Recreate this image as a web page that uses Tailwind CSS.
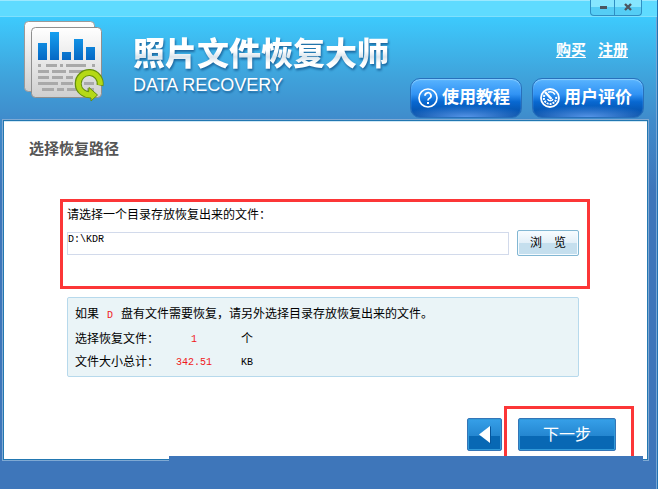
<!DOCTYPE html>
<html lang="zh-CN">
<head>
  <meta charset="UTF-8" />
  <meta name="viewport" content="width=device-width, initial-scale=1.0"/>
  <title>照片文件恢复大师</title>
  <script src="https://cdn.jsdelivr.net/npm/@tailwindcss/browser@4"></script>
</head>
<body class="bg-white pr-2.5 font-['Liberation_Sans','Noto_Sans_CJK_SC',sans-serif] text-xs text-black">
  <div class="relative flex min-h-screen flex-col border-r border-[#2173b3] bg-[#3e76ba] bg-[linear-gradient(to_bottom,#3dcafd_17px,#3fa4dc_75px,#3f8bcb_120px,#3e76ba_190px)] pr-2 pl-0.5 shadow-[inset_-1px_0_0_#77a5d4]">

    <!-- Title bar -->
    <div class="-mr-2 -ml-0.5 flex h-[17px] justify-end border-t border-b border-t-[#9be9ff] border-b-[#7fe0fd] bg-[#5fdbff] pr-[15px]">
      <div class="-mt-px flex h-4 rounded-b-sm border border-t-0 border-[#2f8fc4] bg-linear-to-b from-[#86e6ff] from-50% to-[#55cdf5] to-50%">
        <button type="button" aria-label="最小化" class="flex w-6 items-center justify-center border-r border-[#2f8fc4]">
          <svg class="h-3 w-3" viewBox="0 0 12 12"><path d="M3 4h7v3H3z" fill="#4b5660"/></svg>
        </button>
        <button type="button" aria-label="关闭" class="flex w-[26px] items-center justify-center">
          <svg class="h-3 w-3" viewBox="0 0 12 12"><path d="M3 2l6 6M9 2l-6 6" stroke="#4b5660" stroke-width="2.4"/></svg>
        </button>
      </div>
    </div>

    <!-- Header -->
    <header class="flex h-[102px] items-start">
      <svg class="mt-1 ml-5 h-[82px] w-[84px] shrink-0" viewBox="0 0 84 82">
        <defs>
          <linearGradient id="paper" x1="0" y1="0" x2="0" y2="1"><stop offset="0" stop-color="#fff"/><stop offset="1" stop-color="#cfcfcf"/></linearGradient>
          <linearGradient id="bar" x1="0" y1="0" x2="0" y2="1"><stop offset="0" stop-color="#16a0f0"/><stop offset="1" stop-color="#0668c4"/></linearGradient>
        </defs>
        <rect x="2.5" y="0.5" width="70" height="70" rx="4" fill="url(#paper)" stroke="#999"/>
        <rect x="9.5" y="6.5" width="70" height="70" rx="4" fill="url(#paper)" stroke="#8f8f8f"/>
        <g fill="url(#bar)">
          <path d="M16 22h9v17h-9zM28 11h9v28h-9zM40 31h9v8h-9zM52 18h9v21h-9zM64 26h9v13h-9z"/>
        </g>
        <path d="M16 44.5h3M24 44.5h11M38 44.5h3M44 44.5h20M70 44.5h3M16 50.5h11M30 50.5h14M47 50.5h26M16 56.5h11M30 56.5h11M44 56.5h7M16 62.5h20M39 62.5h12M62 62.5h10M20 68.5h12M35 68.5h7M45 68.5h14M65 68.5h7" stroke="#a9a9a9" stroke-width="3"/>
        <g transform="translate(-2 -1)">
          <path d="M80 65.5A11 11 0 1 0 70 74.5" fill="none" stroke="#648f0d" stroke-width="7"/>
          <path d="M69 67.5l8.5 7.5-6.500 6v-3l-3-.5z" fill="#b5d916" stroke="#648f0d" stroke-linejoin="round"/>
          <path d="M80.3 65A11 11 0 1 0 71.5 74.5" fill="none" stroke="#b5d916" stroke-width="4.8"/>
        </g>
      </svg>
      <div class="mt-3.5 ml-[27px] flex-1 whitespace-nowrap text-white">
        <h1 class="bg-[linear-gradient(to_bottom,#fff_50%,#d9e4ec_65%,#fff_80%)] bg-clip-text font-['Noto_Sans_CJK_SC',sans-serif] text-[32px] leading-10 font-black text-transparent drop-shadow-[1px_2px_1px_#1c679f]">照片文件恢复大师</h1>
        <p class="text-lg leading-7 [text-shadow:1px_2px_2px_#1c679f]">DATA RECOVERY</p>
      </div>
      <div class="mr-[5px] flex h-full flex-col items-end justify-between pt-[21px]">
        <nav class="mr-4 flex gap-3 text-[15px] leading-6 font-bold text-white underline underline-offset-2">
          <a href="#buy">购买</a>
          <a href="#register">注册</a>
        </nav>
        <div class="flex gap-2.5">
          <button type="button" class="mb-px flex h-10 w-28 items-center justify-center gap-1 rounded-[10px] border border-[#2870bb] bg-[radial-gradient(60%_30%_at_bottom,#5595e8_0%,transparent_100%),linear-gradient(to_bottom,#59b4ff_0%,#3193f4_40%,#0868d1_60%,#044a9f_100%)] pr-1 text-[17px] font-bold text-white shadow-[inset_0_1px_1px_#8bd0ff]">
            <svg class="h-5 w-5" viewBox="0 0 20 20" fill="none" stroke="#fff">
              <circle cx="10" cy="10" r="9" stroke-width="1.6"/>
              <path d="M7 7.8a3 3 0 1 1 4.5 2.5Q10 11 10 12.5" stroke-width="1.8"/>
              <path d="M10 14v2" stroke-width="2"/>
            </svg>
            使用教程
          </button>
          <button type="button" class="mb-px flex h-10 w-28 items-center justify-center gap-1 rounded-[10px] border border-[#2870bb] bg-[radial-gradient(60%_30%_at_bottom,#5595e8_0%,transparent_100%),linear-gradient(to_bottom,#59b4ff_0%,#3193f4_40%,#0868d1_60%,#044a9f_100%)] pr-1 text-[17px] font-bold text-white shadow-[inset_0_1px_1px_#8bd0ff]">
            <svg class="h-5 w-5" viewBox="0 0 20 20" fill="none" stroke="#fff">
              <circle cx="10" cy="10" r="9" stroke-width="1.8"/>
              <path d="M4.5 7A6.2 6.2 0 1 0 16 8" stroke-width="2" stroke-dasharray="2 1"/>
              <path d="M8 4.2A6 6 0 0 1 15 6.5" stroke-width="1.5"/>
              <path d="M7.5 11a3 3 0 0 0 5.5 0" stroke-width="1.5"/>
              <path d="M5 4l6.5 7" stroke-width="2.5"/>
            </svg>
            用户评价
          </button>
        </div>
      </div>
    </header>

    <!-- Panel -->
    <main class="mb-7 flex flex-1 flex-col border border-[#7fa9d3] bg-white">
      <div class="flex flex-1 flex-col border border-[#2277b1] shadow-[inset_0_1px_0_#d0e8f6]">
        <h2 class="mt-4 ml-[25px] text-[15px] leading-6 font-bold text-[#555]">选择恢复路径</h2>

        <section class="mt-[38px] mr-[57px] ml-14 h-[90px] border-[3px] border-[#fc3637] pt-px pr-2 pl-1">
          <label for="path" class="block leading-6">请选择一个目录存放恢复出来的文件：</label>
          <div class="mt-[3px] flex items-end gap-2">
            <input id="path" type="text" value="D:\KDR" class="mb-px h-[23px] min-w-0 flex-1 border border-[#d2daeb] pb-2 font-['Liberation_Mono',monospace] text-[10px]"/>
            <button type="button" class="h-[26px] w-[62px] rounded-xs border border-[#82b7d3] bg-linear-to-b from-[#f8fcff] via-[#e2eff8] via-50% to-[#c5dfee] to-50% shadow-[inset_0_0_0_1px_#f5fbff]">浏<span class="ml-3">览</span></button>
          </div>
        </section>

        <section class="mt-2 mr-[68px] ml-[63px] h-20 rounded-xs border border-[#b7d9ec] bg-[#eaf4f7] px-[7px] pt-1">
          <p class="leading-6">如果<span class="mx-2 font-['Liberation_Mono',monospace] text-[10px] text-[#f01820]">D</span>盘有文件需要恢复，请另外选择目录存放恢复出来的文件。</p>
          <table class="leading-[23px]">
            <tbody>
              <tr>
                <th scope="row" class="w-21 text-left font-normal">选择恢复文件：</th>
                <td class="w-[70px] text-center font-['Liberation_Mono',monospace] text-[10px] text-[#f01820]">1</td>
                <td class="pl-3">个</td>
              </tr>
              <tr>
                <th scope="row" class="text-left font-normal">文件大小总计：</th>
                <td class="text-center font-['Liberation_Mono',monospace] text-[10px] text-[#f01820]">342.51</td>
                <td class="pl-3 font-['Liberation_Mono',monospace] text-[10px]">KB</td>
              </tr>
            </tbody>
          </table>
        </section>

        <div class="mt-auto mr-[13px] flex justify-end gap-0.5">
          <button type="button" aria-label="上一步" class="mt-3 flex h-[33px] w-[35px] items-center justify-center rounded-xs border border-[#3475b7] bg-linear-to-b from-[#36a0e9] via-[#2486d0] via-55% to-[#0868b4] to-55% shadow-[inset_0_0_0_1px_#319ad9]">
            <svg class="h-5 w-3" viewBox="0 0 12 20"><path d="M12 1v18L2 10z" fill="#07559b"/><path d="M11 1v17L0 9.5z" fill="#fff"/></svg>
          </button>
          <div class="h-[53px] w-[130px] border-[3px] border-b-0 border-[#fc3637] pt-[9px] pl-[11px]">
            <button type="button" class="h-[33px] w-[98px] rounded-xs border border-[#3475b7] bg-linear-to-b from-[#36a0e9] via-[#2486d0] via-55% to-[#0868b4] to-55% text-base text-white shadow-[inset_0_0_0_1px_#319ad9]">下一步</button>
          </div>
        </div>
      </div>
    </main>

    <!-- Strip lying over the lower edge of the panel -->
    <div class="absolute right-3.5 bottom-0 left-[169px] h-[33px] bg-[#3e76ba]"></div>
  </div>
</body>
</html>
